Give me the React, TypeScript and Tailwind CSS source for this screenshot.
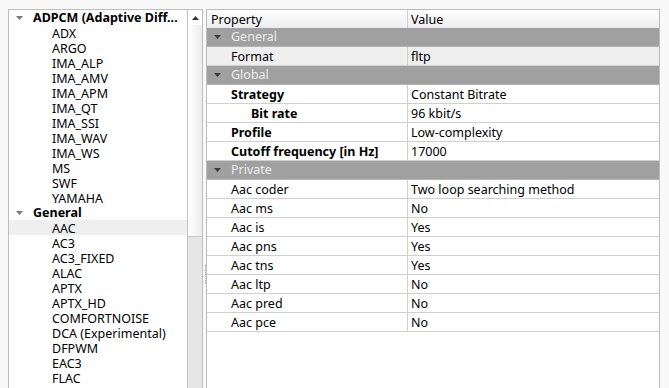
import React from "react";

type TreeItem = { label: string; parent?: boolean; selected?: boolean };

const tree: TreeItem[] = [
  { label: "ADPCM (Adaptive Diff...", parent: true },
  { label: "ADX" },
  { label: "ARGO" },
  { label: "IMA_ALP" },
  { label: "IMA_AMV" },
  { label: "IMA_APM" },
  { label: "IMA_QT" },
  { label: "IMA_SSI" },
  { label: "IMA_WAV" },
  { label: "IMA_WS" },
  { label: "MS" },
  { label: "SWF" },
  { label: "YAMAHA" },
  { label: "General", parent: true },
  { label: "AAC", selected: true },
  { label: "AC3" },
  { label: "AC3_FIXED" },
  { label: "ALAC" },
  { label: "APTX" },
  { label: "APTX_HD" },
  { label: "COMFORTNOISE" },
  { label: "DCA (Experimental)" },
  { label: "DFPWM" },
  { label: "EAC3" },
  { label: "FLAC" },
];

type Row =
  | { kind: "group"; label: string }
  | { kind: "prop"; label: string; value: string; bold?: boolean; indent?: boolean; shaded?: boolean };

const rows: Row[] = [
  { kind: "group", label: "General" },
  { kind: "prop", label: "Format", value: "fltp", shaded: true },
  { kind: "group", label: "Global" },
  { kind: "prop", label: "Strategy", value: "Constant Bitrate", bold: true },
  { kind: "prop", label: "Bit rate", value: "96 kbit/s", bold: true, indent: true },
  { kind: "prop", label: "Profile", value: "Low-complexity", bold: true },
  { kind: "prop", label: "Cutoff frequency [in Hz]", value: "17000", bold: true },
  { kind: "group", label: "Private" },
  { kind: "prop", label: "Aac coder", value: "Two loop searching method" },
  { kind: "prop", label: "Aac ms", value: "No" },
  { kind: "prop", label: "Aac is", value: "Yes" },
  { kind: "prop", label: "Aac pns", value: "Yes" },
  { kind: "prop", label: "Aac tns", value: "Yes" },
  { kind: "prop", label: "Aac ltp", value: "No" },
  { kind: "prop", label: "Aac pred", value: "No" },
  { kind: "prop", label: "Aac pce", value: "No" },
];

function DownArrow({ color }: { color: string }) {
  return (
    <svg width="7" height="4" viewBox="0 0 7 4" className="shrink-0">
      <path d="M0 0 H7 L3.5 4 Z" fill={color} />
    </svg>
  );
}

function CodecTree() {
  return (
    <div className="flex h-full w-[195px] border-l border-t border-r border-[#bdbdbd] bg-white">
      <div className="w-[178px] overflow-hidden">
        {tree.map((item, i) =>
          item.parent ? (
            <div key={i} className="flex h-[15px] items-center pl-[7px] font-bold text-black whitespace-nowrap">
              <DownArrow color="#7a7a7a" />
              <span className="ml-[10px] leading-[17px]">{item.label}</span>
            </div>
          ) : (
            <div
              key={i}
              className={`h-[15px] pl-[43px] leading-[17px] text-black whitespace-nowrap ${item.selected ? "bg-[#efefef]" : ""}`}
            >
              {item.label}
            </div>
          )
        )}
      </div>
      {/* scrollbar */}
      <div className="flex w-[15px] flex-col border-l border-[#c4c4c4]">
        <div className="flex h-[15px] items-center justify-center bg-white">
          <svg width="7" height="4" viewBox="0 0 7 4">
            <path d="M0 4 H7 L3.5 0 Z" fill="#333" />
          </svg>
        </div>
        <div className="h-[212px] border-b border-[#c4c4c4] bg-gradient-to-r from-white to-[#ececec]" />
        <div className="flex-1 bg-[#e6e6e6]" />
      </div>
    </div>
  );
}

function PropertyGrid() {
  return (
    <div className="h-full w-[454px] border-l border-t border-r border-[#bcbcbc] bg-white">
      <div className="flex h-[18px] items-start bg-gradient-to-b from-white to-[#ececec] leading-[20px] text-black">
        <div className="h-full w-[201px] border-r border-[#d0d0d0] pl-[4px]">Property</div>
        <div className="pl-[3px]">Value</div>
      </div>
      {rows.map((r, i) =>
        r.kind === "group" ? (
          <div key={i} className="flex h-[19px] items-center border-b border-[#b4b4b4] bg-[#a0a0a0] pl-[7px] text-[#ededed]">
            <DownArrow color="#3c3c3c" />
            <span className="ml-[10px] leading-[20px]">{r.label}</span>
          </div>
        ) : (
          <div
            key={i}
            className={`flex h-[19px] border-b border-[#d0d0d0] leading-[20px] text-black ${r.shaded ? "bg-[#efefef]" : ""}`}
          >
            <div
              className={`h-full w-[201px] shrink-0 border-r border-[#d0d0d0] whitespace-nowrap ${r.indent ? "pl-[44px]" : "pl-[24px]"} ${r.bold ? "font-bold" : ""}`}
            >
              {r.label}
            </div>
            <div className="pl-[3px] whitespace-nowrap">{r.value}</div>
          </div>
        )
      )}
    </div>
  );
}

export default function App() {
  return (
    <div
      className="flex h-[388px] w-[669px] overflow-hidden bg-[#f9f9f9] pt-[9px] pl-[8px] text-[12.5px]"
      style={{ fontFamily: '"Noto Sans", "Liberation Sans", sans-serif' }}
    >
      <CodecTree />
      <div className="relative w-[3px]">
        <div className="absolute left-[2px] top-[256px] h-[18px] border-l border-dotted border-[#a8a8a8]" />
      </div>
      <PropertyGrid />
    </div>
  );
}
